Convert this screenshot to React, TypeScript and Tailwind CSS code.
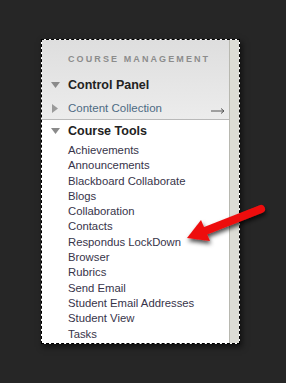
const tools = [
  'Achievements',
  'Announcements',
  'Blackboard Collaborate',
  'Blogs',
  'Collaboration',
  'Contacts',
  'Respondus LockDown Browser',
  'Rubrics',
  'Send Email',
  'Student Email Addresses',
  'Student View',
  'Tasks',
]

function Caret({ dir }: { dir: 'down' | 'right' }) {
  return dir === 'down' ? (
    <svg width="9" height="6" viewBox="0 0 9 6" className="shrink-0">
      <path d="M0 0 H9 L4.5 6 Z" fill="#8a8a8a" />
    </svg>
  ) : (
    <svg width="6" height="9" viewBox="0 0 6 9" className="shrink-0">
      <path d="M0 0 V9 L6 4.5 Z" fill="#9a9a9a" />
    </svg>
  )
}

export default function App() {
  return (
    <div className="relative h-[383px] w-[286px] overflow-hidden bg-[#262626] pl-[41px] pt-[39px] font-['Liberation_Sans',Arial,sans-serif]">
      <div className="flex h-[305px] w-[199px] overflow-hidden border border-dashed border-black bg-white shadow-[2px_3px_6px_rgba(0,0,0,0.6)]">
        <div className="flex w-[187px] flex-col">
          <div className="h-[80px] shrink-0 border-b border-[#b9b9b9] bg-gradient-to-b from-[#dedede] to-[#ececec]">
            <div className="pl-[26px] pt-[14px] text-[9px] font-bold leading-[11px] tracking-[2.1px] text-[#8c8c8c]">
              COURSE MANAGEMENT
            </div>
            <div className="mt-[12px] flex items-center pl-[9px] leading-[16px]">
              <span className="flex w-[17px] justify-start"><Caret dir="down" /></span>
              <span className="text-[12.5px] font-bold text-[#222]">Control Panel</span>
            </div>
            <div className="mt-[7px] flex items-center pl-[10px] leading-[16px]">
              <span className="flex w-[16px] justify-start"><Caret dir="right" /></span>
              <span className="text-[11.5px] text-[#4e6a84]">Content Collection</span>
              <svg className="ml-auto mr-[4px] mt-[5px]" width="14" height="6" viewBox="0 0 14 6">
                <path d="M0 3 H13 M10 0.5 L13 3 L10 5.5" fill="none" stroke="#555" strokeWidth="1" />
              </svg>
            </div>
          </div>
          <div className="flex shrink-0 items-center pl-[9px] pt-[3px] leading-[16px]">
            <span className="flex w-[17px] justify-start"><Caret dir="down" /></span>
            <span className="text-[12.5px] font-bold text-[#222]">Course Tools</span>
          </div>
          <ul className="mt-[4px] pl-[26px] text-[11.3px] leading-[15.3px] text-[#37344a]">
            {tools.map(t => (
              <li key={t} className="w-[135px]">{t}</li>
            ))}
          </ul>
        </div>
        <div className="w-[10px] border-l border-[#b8b8b0] bg-[#dcdcd5]" />
      </div>

      <svg className="absolute left-[180px] top-[195px]" width="100" height="65" viewBox="0 0 100 65">
        <defs>
          <filter id="sh" x="-20%" y="-20%" width="140%" height="160%">
            <feDropShadow dx="1" dy="3" stdDeviation="2" floodColor="#000" floodOpacity="0.7" />
          </filter>
        </defs>
        <g filter="url(#sh)">
          <line x1="81" y1="14" x2="25" y2="36" stroke="#ee1111" strokeWidth="8" strokeLinecap="round" />
          <path d="M7 43 L21 25 L30 46 Z" fill="#ee1111" />
        </g>
      </svg>
    </div>
  )
}
